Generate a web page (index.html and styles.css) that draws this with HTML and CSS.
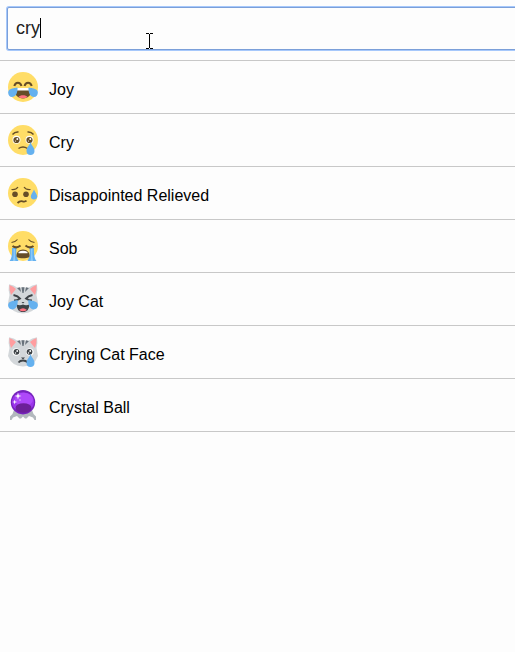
FILE: index.html
```html
<!DOCTYPE html>
<html lang="en">
<head>
<meta charset="utf-8">
<title>Emoji search</title>
<link rel="stylesheet" href="styles.css">
</head>
<body>
<div class="search">
  <input class="search-input" type="text" value="cry" aria-label="Search emoji">
  <span class="caret" aria-hidden="true"></span>
  <svg class="pointer" viewBox="0 0 8 16" aria-hidden="true"><path d="M1 .5h3M5 .5h3M4.500 1v14M1 15.500h3M5 15.500h3" fill="none" stroke="#000"/></svg>
</div>
<ul class="results">
  <li class="result">
    <svg class="emoji" viewBox="0 0 30 30" aria-hidden="true">
      <circle cx="15" cy="15" r="15" fill="#ffdd67"/>
      <path d="M6.300 14c1.200-4.400 6-4.400 7.200 0M16.500 14c1.200-4.400 6-4.400 7.200 0" fill="none" stroke="#664e27" stroke-width="2"/>
      <path d="M7 16h16c.8 0 1 .7 1 1.500C23.500 23 20 26.500 15 26.500S6.500 23 6 17.500C6 16.700 6.200 16 7 16Z" fill="#664e27"/>
      <path d="M7 16h16v2.500H7Z" fill="#fff"/>
      <path d="M10.500 25c1.500-2.300 7.500-2.300 9 0-2.500 1.700-6.500 1.700-9 0Z" fill="#ff717f"/>
      <path d="M9.500 15.500c.3 5-1.500 9.500-5.500 9.500-3 0-4.600-3.500-3.500-6 1.400-2.800 5.500-2.500 9-3.500ZM20.500 15.500c-.3 5 1.500 9.500 5.500 9.500 3 0 4.600-3.500 3.500-6-1.400-2.800-5.500-2.500-9-3.500Z" fill="#65b1ef"/>
    </svg>
    <span>Joy</span>
  </li>
  <li class="result">
    <svg class="emoji" viewBox="0 0 30 30" aria-hidden="true">
      <circle cx="15" cy="15" r="15" fill="#ffdd67"/>
      <path d="M4.500 9.500Q7 6.500 10.500 7M19.500 7Q23 6.500 25.500 9.500M10.500 23.500Q15 20.500 19.500 23.500" fill="none" stroke="#664e27" stroke-width="1.500"/>
      <circle cx="8.500" cy="14.800" r="4" fill="#fff"/><circle cx="21.500" cy="14.800" r="4" fill="#fff"/>
      <circle cx="8.500" cy="15" r="3.100" fill="#664e27"/><circle cx="21.500" cy="15" r="3.100" fill="#664e27"/>
      <circle cx="9.300" cy="14" r="1" fill="#fff"/><circle cx="22.300" cy="14" r="1" fill="#fff"/>
      <circle cx="7.500" cy="16" r=".6" fill="#fff"/><circle cx="20.500" cy="16" r=".6" fill="#fff"/>
      <path d="M22.500 17c1 3.500 4 5.500 4 9 0 2.500-1.600 4-4 4s-4-1.500-4-4c0-3.500 3-5.500 4-9Z" fill="#65b1ef"/>
    </svg>
    <span>Cry</span>
  </li>
  <li class="result">
    <svg class="emoji" viewBox="0 0 30 30" aria-hidden="true">
      <circle cx="15" cy="15" r="15" fill="#ffdd67"/>
      <path d="M3.500 11.500Q8 12 10 9M16 9Q18 12 22.500 11.500" fill="none" stroke="#664e27" stroke-width="1.200"/>
      <circle cx="7" cy="16.200" r="2.800" fill="#664e27"/><circle cx="18" cy="16.200" r="2.800" fill="#664e27"/>
      <path d="M9.500 25Q12 22.500 14.500 23.300T18.500 22.700" fill="none" stroke="#664e27" stroke-width="1.800"/>
      <path d="M26 11.500c1 3 3.200 4.800 3.200 7 0 2-1.300 3-3.200 3s-3.200-1-3.200-3c0-2.200 2.200-4 3.200-7Z" fill="#65b1ef"/>
    </svg>
    <span>Disappointed Relieved</span>
  </li>
  <li class="result">
    <svg class="emoji" viewBox="0 0 30 30" aria-hidden="true">
      <circle cx="15" cy="15" r="15" fill="#ffdd67"/>
      <path d="M4 17h4.500Q7.500 25 10.500 30H1.500Q4.500 27 4 17ZM21.500 17H26Q25.500 27 28.500 30H19.500Q22.500 25 21.500 17Z" fill="#65b1ef"/>
      <path d="M5.500 18H7q-.5 7 .5 12H5Q6 24 5.500 18ZM23 18h1.500Q24 24 25 30h-2.500q1-5 .5-12Z" fill="#8ecbfa"/>
      <path d="M3.500 11.500Q7.500 11 9.500 8.500M20.500 8.500Q22.500 11 26.500 11.500" fill="none" stroke="#664e27" stroke-width="1.200"/>
      <path d="M4.500 15Q8.500 18 12.500 14.500M17.500 14.500Q21.500 18 25.500 15" fill="none" stroke="#664e27" stroke-width="2"/>
      <path d="M15 18.500c4 0 6.500 3 6.500 6 0 2-1 2.700-6.500 2.700S8.500 26.500 8.500 24.500c0-3 2.500-6 6.500-6Z" fill="#664e27"/>
      <path d="M10.500 21Q15 18.500 19.500 21V22.300h-9Z" fill="#fff"/>
    </svg>
    <span>Sob</span>
  </li>
  <li class="result">
    <svg class="emoji" viewBox="0 0 30 30" aria-hidden="true">
      <path d="M1 .2Q6 1 10 4Q15 2.500 20 4Q24 1 29 .2Q30 6 28.500 11L30 19Q26 29.500 15 29.500T0 19L1.500 11Q0 6 1 .2Z" fill="#d3d7da"/>
      <path d="M1.500 1Q5.500 2.500 8 5L3 11Q1 6 1.500 1ZM28.500 1Q24.500 2.500 22 5L27 11Q29 6 28.500 1Z" fill="#ff9d9f"/>
      <path d="M9 4l3-.8L13 8ZM13.500 3.200h3L15.600 9h-1.200ZM18 3.200 21 4l-4 4Z" fill="#67717a"/>
      <path d="M5.500 11Q10 12 12 14.500Q9 16.500 6 16.500M24.500 11Q20 12 18 14.500Q21 16.500 24 16.500" fill="none" stroke="#3e4347" stroke-width="2"/>
      <path d="M13.500 18h3L15 19.500Z" fill="#3e4347"/>
      <path d="M8.500 20.500Q12 22 15 20.500Q18 22 21.500 20.500C21 25.500 19 28 15 28S9 25.500 8.500 20.500Z" fill="#3e4347"/>
      <path d="M11 26Q15 22.500 19 26Q15 28.500 11 26Z" fill="#ff717f"/>
      <path d="M9.700 16c.3 5-1.700 9.500-5.500 9.500C1 25.500-.8 22 .5 19.500 2 16.700 6 17 9.700 16ZM20.300 16c-.3 5 1.700 9.500 5.500 9.500 3.200 0 5-3.500 3.700-6-1.500-2.800-5.500-2.500-9.200-3.500Z" fill="#65b1ef"/>
    </svg>
    <span>Joy Cat</span>
  </li>
  <li class="result">
    <svg class="emoji" viewBox="0 0 30 30" aria-hidden="true">
      <path d="M1 .2Q6 1 10 4Q15 2.500 20 4Q24 1 29 .2Q30 6 28.500 11L30 19Q26 29.500 15 29.500T0 19L1.500 11Q0 6 1 .2Z" fill="#d3d7da"/>
      <path d="M1.500 1Q5.500 2.500 8 5L3 11Q1 6 1.500 1ZM28.500 1Q24.500 2.500 22 5L27 11Q29 6 28.500 1Z" fill="#ff9d9f"/>
      <path d="M9 4l3-.8L13 8ZM13.500 3.200h3L15.600 9h-1.200ZM18 3.200 21 4l-4 4Z" fill="#67717a"/>
      <circle cx="8.200" cy="15" r="3.800" fill="#fff"/><circle cx="21.800" cy="15" r="3.800" fill="#fff"/>
      <circle cx="8.500" cy="14.800" r="2.900" fill="#3e4347"/><circle cx="21.500" cy="14.800" r="2.900" fill="#3e4347"/>
      <circle cx="9.200" cy="14" r=".9" fill="#fff"/><circle cx="22.200" cy="14" r=".9" fill="#fff"/>
      <circle cx="7.500" cy="16" r=".7" fill="#fff"/><circle cx="20.500" cy="16" r=".7" fill="#fff"/>
      <path d="M13 20.500h4L15 22.500Z" fill="#3e4347"/>
      <path d="M10.500 25.500Q12 23.500 15 23.500T19.500 25.500" fill="none" stroke="#3e4347" stroke-width="1.800"/>
      <path d="M22.500 17c1 3.500 4 5.500 4 9 0 2.500-1.600 4-4 4s-4-1.500-4-4c0-3.500 3-5.500 4-9Z" fill="#65b1ef"/>
    </svg>
    <span>Crying Cat Face</span>
  </li>
  <li class="result">
    <svg class="emoji" viewBox="0 0 30 30" aria-hidden="true">
      <path d="M6 20Q15 26 24 20L25.500 24 28 26.500v3.500h-1.500L25 27.500l-4-1.500-2.500 2.500H17L15 26.500 13 28.500h-1.500L9 26l-4 1.500L3.500 30H2v-3.500L4.500 24Z" fill="#b2b8bd"/>
      <circle cx="15" cy="12.200" r="12.200" fill="#7623bd"/>
      <ellipse cx="15" cy="12" rx="11" ry="9.800" fill="#9b36eb"/>
      <ellipse cx="16" cy="9.500" rx="9" ry="6.800" fill="#ae49fa"/>
      <ellipse cx="15.500" cy="18" rx="8" ry="4.800" fill="#6c2099"/>
      <path d="M10 2.500l.8 2.700 2.700.8-2.700.8L10 9.500l-.8-2.700L6.500 6l2.700-.8ZM6.700 9.500l.6 1.900 1.900.6-1.900.6-.6 1.900-.6-1.900-1.900-.6 1.900-.6Z" fill="#fff"/>
      <circle cx="12" cy="10" r=".8" fill="#e4bfff"/>
    </svg>
    <span>Crystal Ball</span>
  </li>
</ul>
</body>
</html>
```
FILE: styles.css
```css
* {
  box-sizing: border-box;
}

body {
  margin: 0;
  background: #fdfdfd;
  color: #000;
  font: 16px/20px "Liberation Sans", Arial, sans-serif;
  overflow-x: hidden;
}

.search {
  position: relative;
  padding: 7px 0 10px 7px;
}

/* The field runs past the right edge of the window. */
.search-input {
  display: block;
  width: calc(100% + 8px);
  height: 43px;
  padding: 0 8px;
  border: 1px solid #7b9fd9;
  border-radius: 2px;
  outline: none;
  box-shadow: 0 0 0 1px #a6c8fb;
  background: #fdfdfd;
  color: #222;
  font: 18px/24px "Liberation Sans", Arial, sans-serif;
}

.caret {
  position: absolute;
  top: 18px;
  left: 40px;
  width: 1px;
  height: 20px;
  background: #000;
}

.pointer {
  position: absolute;
  top: 33px;
  left: 145px;
  width: 8px;
  height: 16px;
}

.results {
  margin: 0;
  padding: 0;
  border-top: 1px solid #c8c8c8;
  list-style: none;
}

.result {
  display: flex;
  align-items: flex-start;
  gap: 11px;
  padding: 11px 8px;
  border-bottom: 1px solid #c8c8c8;
}

.result span {
  padding-top: 8px;
}

.emoji {
  flex: none;
  width: 30px;
  height: 30px;
}
```
